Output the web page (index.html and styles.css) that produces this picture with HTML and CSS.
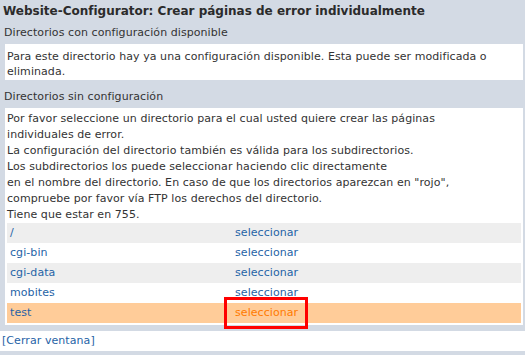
FILE: index.html
```html
<!DOCTYPE html>
<html lang="es">
<head>
    <meta charset="UTF-8">
    <title>Website-Configurator</title>
    <link rel="stylesheet" href="styles.css">
</head>
<body>
    <div class="dialog">
        <h1 class="title">Website-Configurator: Crear páginas de error individualmente</h1>
        <div class="section-head">Directorios con configuración disponible</div>
        <div class="panel panel-info">
            Para este directorio hay ya una configuración disponible. Esta puede ser modificada o<br>
            eliminada.
        </div>
        <div class="section-head">Directorios sin configuración</div>
        <div class="panel panel-list">
            Por favor seleccione un directorio para el cual usted quiere crear las páginas<br>
            individuales de error.<br>
            La configuración del directorio también es válida para los subdirectorios.<br>
            Los subdirectorios los puede seleccionar haciendo clic directamente<br>
            en el nombre del directorio. En caso de que los directorios aparezcan en "rojo",<br>
            compruebe por favor vía FTP los derechos del directorio.<br>
            Tiene que estar en 755.
            <table class="dirs">
                <tr class="odd">
                    <td class="name"><a href="#">/</a></td>
                    <td><a href="#">seleccionar</a></td>
                </tr>
                <tr>
                    <td class="name"><a href="#">cgi-bin</a></td>
                    <td><a href="#">seleccionar</a></td>
                </tr>
                <tr class="odd">
                    <td class="name"><a href="#">cgi-data</a></td>
                    <td><a href="#">seleccionar</a></td>
                </tr>
                <tr>
                    <td class="name"><a href="#">mobites</a></td>
                    <td><a href="#">seleccionar</a></td>
                </tr>
                <tr class="active">
                    <td class="name"><a href="#">test</a></td>
                    <td><a href="#" class="highlight">seleccionar</a></td>
                </tr>
            </table>
        </div>
    </div>
    <div class="footer">
        <a href="#">[Cerrar ventana]</a>
    </div>
</body>
</html>
```

FILE: styles.css
```css
body {
    margin: 0;
    background: #d3dae4;
    font-family: 'DejaVu Sans', Verdana, sans-serif;
    font-size: 11px;
    line-height: 16px;
    letter-spacing: 0.07px;
    color: #333;
}
a {
    color: #1f63a6;
    text-decoration: none;
}
.title {
    margin: 0;
    padding-left: 3px;
    font-size: 12px;
    font-weight: bold;
    line-height: 22px;
    letter-spacing: 0;
    color: #2b2b2b;
}
.section-head {
    padding-left: 4px;
    line-height: 22px;
}
.panel {
    background: #fff;
    margin: 0 2px 6px 5px;
    padding: 2px;
}
.panel-info {
    padding: 5px 2px 1px;
    line-height: 15px;
}
.panel-list {
    padding-top: 3px;
}
.dirs {
    width: 100%;
    border-collapse: collapse;
}
.dirs td {
    padding: 0 3px;
    height: 20px;
}
.dirs td.name {
    width: 219px;
}
.dirs tr.odd {
    background: #eeeeee;
}
.dirs tr.active {
    background: #ffcc99;
}
.dirs tr.active .highlight {
    color: #ff7a00;
}
.highlight {
    position: relative;
    display: inline-block;
}
.highlight::after {
    content: "";
    position: absolute;
    top: -8px;
    bottom: -8px;
    left: -11px;
    right: -10px;
    border: 3px solid #ff0000;
}
.footer {
    background: #fff;
    padding-left: 2px;
    line-height: 20px;
}
```
